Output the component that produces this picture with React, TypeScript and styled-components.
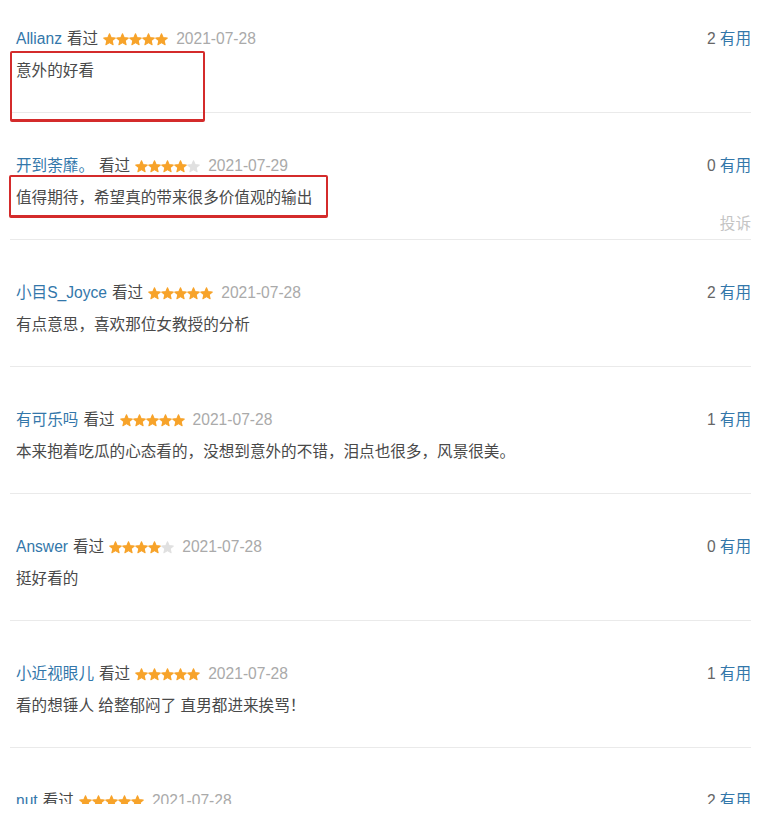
import React from "react";
import styled, { createGlobalStyle } from "styled-components";

const Global = createGlobalStyle`
  html, body { margin: 0; padding: 0; background: #fff; }
  body {
    font-family: "Liberation Sans", Arial, "Noto Sans CJK SC", sans-serif;
    font-size: 15.6px;
    color: #494949;
  }
`;

const Viewport = styled.div`
  height: 804px;
  overflow: hidden;
  background: #fff;
`;

const List = styled.div`
  position: relative;
  margin-left: 10px;
  width: 741px;
`;

const Item = styled.div`
  display: flex;
  flex-direction: column;
  box-sizing: border-box;
  height: 127px;
  padding: 42px 0 5px 6px;
  border-bottom: 1px solid #eaeaea;
  &:first-child {
    height: 113px;
    padding-top: 28px;
  }
`;

const Header = styled.div`
  display: flex;
  align-items: center;
  height: 22px;
  line-height: 22px;
  white-space: nowrap;
`;

const Info = styled.div`
  display: flex;
  align-items: center;
  flex: 1;
`;

const Name = styled.span`
  color: #37a;
`;

const Watched = styled.span`
  color: #494949;
  margin-left: 5px;
`;

const Stars = styled.span`
  display: inline-flex;
  margin-left: 5px;
`;

const DateText = styled.span`
  color: #aaa;
  margin-left: 8px;
`;

const Votes = styled.span`
  color: #666;
`;

const Useful = styled.span`
  color: #37a;
  margin-left: 4px;
`;

const Content = styled.p`
  margin: 10px 0 0;
  height: 22px;
  line-height: 22px;
  color: #494949;
  white-space: nowrap;
`;

const Footer = styled.div`
  margin-top: auto;
  height: 20px;
  line-height: 20px;
  text-align: right;
  color: #c4c4c4;
`;

const Mark = styled.div<{ $top: number; $left: number; $w: number; $h: number }>`
  position: absolute;
  top: ${(p) => p.$top}px;
  left: ${(p) => p.$left}px;
  width: ${(p) => p.$w}px;
  height: ${(p) => p.$h}px;
  box-sizing: border-box;
  border: 2px solid #d42b2b;
  border-bottom-width: 3px;
  border-radius: 2px;
  pointer-events: none;
`;

const Star = ({ on }: { on: boolean }) => (
  <svg width="13" height="13" viewBox="0 0 24 24">
    <path
      d="M12 1.5l3.1 7.1 7.6.6-5.8 5 1.8 7.5L12 17.8l-6.7 3.9 1.8-7.5-5.8-5 7.6-.6z"
      fill={on ? "#f7a32a" : "#e0e0e0"}
      stroke={on ? "#f7a32a" : "#e0e0e0"}
      strokeWidth="2"
      strokeLinejoin="round"
    />
  </svg>
);

type Review = {
  name: string;
  stars: number;
  date: string;
  text: string;
  votes: number;
  report?: boolean;
};

const reviews: Review[] = [
  { name: "Allianz", stars: 5, date: "2021-07-28", text: "意外的好看", votes: 2 },
  { name: "开到荼靡。", stars: 4, date: "2021-07-29", text: "值得期待，希望真的带来很多价值观的输出", votes: 0, report: true },
  { name: "小目S_Joyce", stars: 5, date: "2021-07-28", text: "有点意思，喜欢那位女教授的分析", votes: 2 },
  { name: "有可乐吗", stars: 5, date: "2021-07-28", text: "本来抱着吃瓜的心态看的，没想到意外的不错，泪点也很多，风景很美。", votes: 1 },
  { name: "Answer", stars: 4, date: "2021-07-28", text: "挺好看的", votes: 0 },
  { name: "小近视眼儿", stars: 5, date: "2021-07-28", text: "看的想锤人 给整郁闷了 直男都进来挨骂！", votes: 1 },
  { name: "nut", stars: 5, date: "2021-07-28", text: "", votes: 2 },
];

export default function App() {
  return (
    <Viewport>
      <Global />
      <List>
        {reviews.map((r, i) => (
          <Item key={i}>
            <Header>
              <Info>
                <Name>{r.name}</Name>
                <Watched>看过</Watched>
                <Stars>
                  {[0, 1, 2, 3, 4].map((s) => (
                    <Star key={s} on={s < r.stars} />
                  ))}
                </Stars>
                <DateText>{r.date}</DateText>
              </Info>
              <Votes>{r.votes}</Votes>
              <Useful>有用</Useful>
            </Header>
            <Content>{r.text}</Content>
            {r.report && <Footer>投诉</Footer>}
          </Item>
        ))}
        <Mark $top={51} $left={0} $w={195} $h={71} />
        <Mark $top={175} $left={-1} $w={319} $h={43} />
      </List>
    </Viewport>
  );
}
